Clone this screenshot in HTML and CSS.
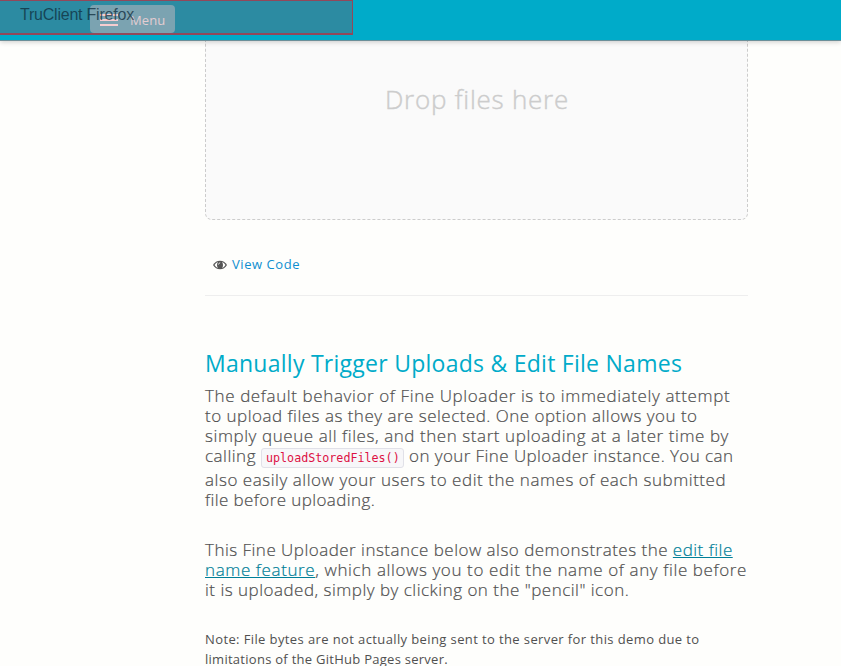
FILE: index.html
```html
<!DOCTYPE html>
<html lang="en">
<head>
<meta charset="utf-8">
<title>Fine Uploader Demos</title>
<link rel="stylesheet" href="styles.css">
</head>
<body>
<div class="page">
  <header class="navbar">
    <div class="recorder-frame"></div>
    <button class="menu-button"><span class="bars"><i></i><i></i><i></i></span><span class="menu-label">Menu</span></button>
    <div class="recorder-label">TruClient Firefox</div>
  </header>
  <main class="content">
    <div class="dropzone"><span class="drop-label">Drop files here</span></div>
    <div class="view-code">
      <svg class="eye" viewBox="0 0 14 10" width="14" height="10"><path d="M0 5C3-.7 11-.7 14 5C11 10.700 3 10.700 0 5Z" fill="#555"/><path d="M1.500 5Q3 2.500 5 1.900Q3 5 5 8.100Q3 7.500 1.500 5ZM12.500 5Q11 2.500 9 1.900Q11 5 9 8.100Q11 7.500 12.500 5Z" fill="#fefefc"/><path d="M5.400 4.600Q5.600 3 7.200 2.800" fill="none" stroke="#fefefc" stroke-width=".8"/></svg>
      <a class="code-link">View Code</a>
    </div>
    <h2 class="title">Manually Trigger Uploads &amp; Edit File Names</h2>
    <p class="copy">
      <span class="line a1">The default behavior of Fine Uploader is to immediately attempt</span>
      <span class="line a2">to upload files as they are selected. One option allows you to</span>
      <span class="line a3">simply queue all files, and then start uploading at a later time by</span>
      <span class="line code-line"><span class="a4">calling</span><code>uploadStoredFiles()</code><span class="a5">on your Fine Uploader instance. You can</span></span>
      <span class="line a6">also easily allow your users to edit the names of each submitted</span>
      <span class="line a7">file before uploading.</span>
    </p>
    <p class="copy second">
      <span class="line b1">This Fine Uploader instance below also demonstrates the <a>edit file</a></span>
      <span class="line b2"><a>name feature</a>, which allows you to edit the name of any file before</span>
      <span class="line b3">it is uploaded, simply by clicking on the "pencil" icon.</span>
    </p>
    <p class="note">
      <span class="line c1">Note: File bytes are not actually being sent to the server for this demo due to</span>
      <span class="line c2">limitations of the GitHub Pages server.</span>
    </p>
  </main>
</div>
</body>
</html>
```
FILE: styles.css
```css
* { box-sizing: border-box; }
html { background: #fff; overflow: hidden; }
body { margin: 0; height: 666px; overflow: hidden; }
.page { width: 841px; height: 666px; overflow: hidden; background: #fefefc; color: #505050; font-family: "Open Sans", sans-serif; font-weight: 300; }
.navbar { position: relative; height: 41px; padding: 5px 0 0 90px; background: #00abc9; border-bottom: 1px solid #6b8f99; box-shadow: 0 1px 5px rgba(0,0,0,.2); }
.menu-button { position: relative; display: flex; align-items: center; gap: 12px; width: 85px; height: 28px; padding: 2px 0 0 10px; border: 0; border-radius: 4px; background: #7ba3b1; color: #e4cdd2; font: 400 13px "Open Sans", sans-serif; letter-spacing: .1px; }
.bars { display: flex; flex-direction: column; gap: 3px; width: 18px; }
.bars i { height: 2px; background: #f6cdd0; }
.recorder-frame { position: absolute; left: 0; top: 0; width: 352.500px; height: 35px; border: 1px solid #92485a; border-left: 0; border-bottom-width: 2px; background: #2c8ba2; }
.recorder-label { position: absolute; left: 20px; top: 6px; color: rgba(15,45,60,.75); font: 400 16px/18px "Liberation Sans", sans-serif; letter-spacing: -.22px; }
.content { width: 543px; margin-left: 205px; }
.dropzone { display: flex; justify-content: center; height: 179px; padding-top: 36px; border: 1px dashed #ccc; border-top: 0; border-radius: 0 0 7px 7px; background: #fafafa; color: #ccc; font-size: 26px; line-height: 44px; letter-spacing: .75px; text-indent: 1px; -webkit-text-stroke: .4px #ccc; }
.drop-label { white-space: nowrap; }
.view-code { display: flex; align-items: center; gap: 5px; height: 76px; padding: 14px 0 0 8px; border-bottom: 1px solid #eee; font-size: 13px; line-height: 18px; font-weight: 400; }
.code-link { margin-top: -2px; color: #0f8fd0; letter-spacing: .55px; }
.title { margin: 52px 0 8px; color: #00abc9; font-size: 23px; line-height: 30px; font-weight: 400; letter-spacing: .26px; white-space: nowrap; }
.copy { margin: 0 0 30px; font-size: 17px; line-height: 20px; -webkit-text-stroke: .2px; }
.second { margin-bottom: 29px; }
.line { display: block; width: max-content; white-space: nowrap; }
.a1 { letter-spacing: .61px; }
.a2 { letter-spacing: .49px; }
.a3 { letter-spacing: .57px; }
.a4 { width: 51px; letter-spacing: .5px; }
.a5 { letter-spacing: .42px; }
.a6 { letter-spacing: .54px; }
.a7 { letter-spacing: .4px; }
.b1 { letter-spacing: .48px; }
.b2 { letter-spacing: .61px; }
.b3 { letter-spacing: .49px; }
.copy a { color: #007f98; text-decoration: underline; text-decoration-skip-ink: none; text-decoration-thickness: 1px; }
.code-line { display: flex; height: 24px; }
code { height: 20px; width: 143px; margin: 2px 5px 0; padding: 0 4px; border: 1px solid #e1e1e8; border-radius: 3px; background: #f7f7f9; color: #dd1144; font: 400 11.7px/18px "DejaVu Sans Mono", monospace; -webkit-text-stroke: 0; }
.note { margin: 0; font-size: 13px; line-height: 20px; font-weight: 400; }
.c1 { letter-spacing: .39px; }
.c2 { letter-spacing: .27px; }
```
